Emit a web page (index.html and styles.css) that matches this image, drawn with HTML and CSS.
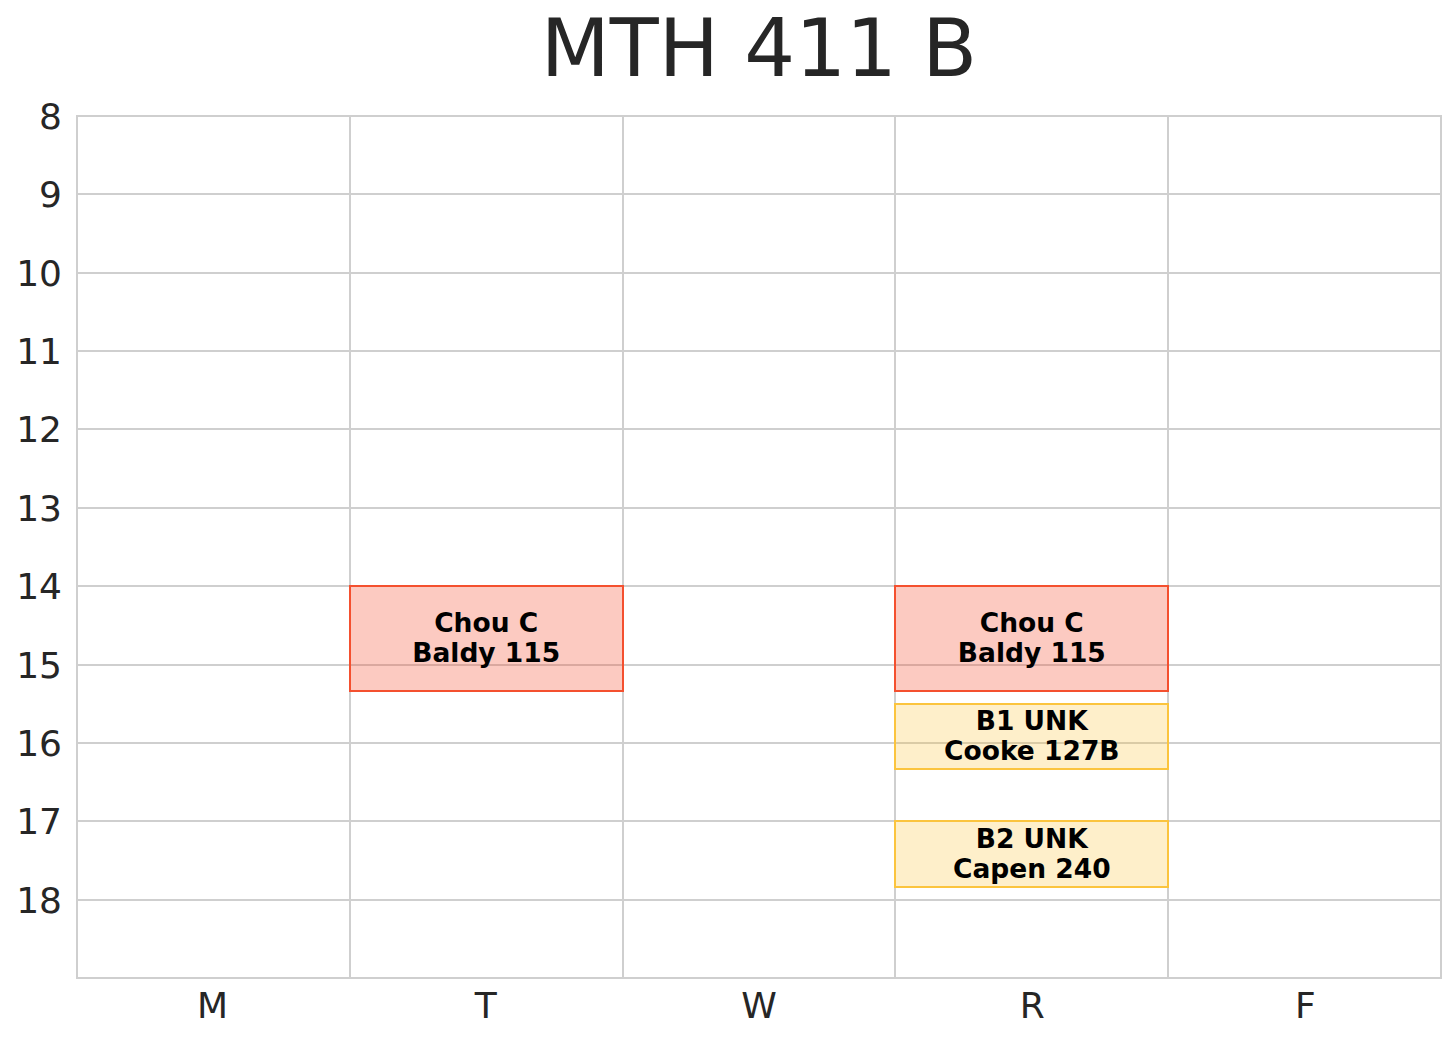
FILE: index.html
```
<!DOCTYPE html>
<html lang="en">
<head>
<meta charset="utf-8">
<title>MTH 411 B</title>
<link rel="stylesheet" href="styles.css">
</head>
<body>
<div class="figure">
  <h1 class="title">MTH 411 B</h1>
  <div class="chart">
    <div class="yaxis">
      <div class="ytick"><span>8</span></div>
      <div class="ytick"><span>9</span></div>
      <div class="ytick"><span>10</span></div>
      <div class="ytick"><span>11</span></div>
      <div class="ytick"><span>12</span></div>
      <div class="ytick"><span>13</span></div>
      <div class="ytick"><span>14</span></div>
      <div class="ytick"><span>15</span></div>
      <div class="ytick"><span>16</span></div>
      <div class="ytick"><span>17</span></div>
      <div class="ytick"><span>18</span></div>
    </div>
    <div class="plot">
      <div class="day"></div>
      <div class="day">
        <div class="event lecture" style="top:468.16px;height:106.48px">Chou C<br>Baldy 115</div>
      </div>
      <div class="day"></div>
      <div class="day">
        <div class="event lecture" style="top:468.16px;height:106.48px">Chou C<br>Baldy 115</div>
        <div class="event recitation" style="top:585.7px;height:67.3px">B1 UNK<br>Cooke 127B</div>
        <div class="event recitation" style="top:703.24px;height:67.3px">B2 UNK<br>Capen 240</div>
      </div>
      <div class="day"></div>
    </div>
  </div>
  <div class="xaxis">
    <div class="xtick">M</div>
    <div class="xtick">T</div>
    <div class="xtick">W</div>
    <div class="xtick">R</div>
    <div class="xtick">F</div>
  </div>
</div>
</body>
</html>
```
FILE: styles.css
```
html, body {
  margin: 0;
  padding: 0;
  background: #ffffff;
}

body {
  width: 1456px;
  height: 1040px;
  overflow: hidden;
  font-family: "DejaVu Sans", "Liberation Sans", sans-serif;
  color: #262626;
}

.figure {
  display: flex;
  flex-direction: column;
}

.title {
  margin: 0 0 18px 76px;
  padding-top: 1px;
  width: 1366px;
  font-size: 80px;
  font-weight: normal;
  line-height: 96px;
  text-align: center;
  color: #262626;
}

.chart {
  display: flex;
}

.yaxis {
  width: 76px;
  box-sizing: border-box;
  padding-top: 1px;
  padding-right: 14px;
  display: flex;
  flex-direction: column;
}

.ytick {
  height: 78.36px;
  display: flex;
  justify-content: flex-end;
  align-items: flex-start;
  font-size: 36px;
}

.ytick span {
  line-height: 0;
  display: block;
  padding-top: 1px;
}

.plot {
  width: 1366px;
  height: 864px;
  box-sizing: border-box;
  border: 2px solid #cfcfcf;
  background: #cfcfcf;
  display: grid;
  grid-template-columns: repeat(5, 1fr);
  column-gap: 2px;
}

.day {
  position: relative;
  background-color: #ffffff;
  background-image: repeating-linear-gradient(to bottom, transparent 0, transparent 76.36px, #cfcfcf 76.36px, #cfcfcf 78.36px);
}

.event {
  position: absolute;
  left: -2px;
  right: -2px;
  box-sizing: border-box;
  border: 2px solid;
  display: flex;
  align-items: center;
  justify-content: center;
  text-align: center;
  font-size: 26.5px;
  font-weight: bold;
  line-height: 30px;
  color: #000000;
}

.lecture {
  background: rgba(244, 80, 50, 0.3);
  border-color: #f4502f;
}

.recitation {
  background: rgba(251, 192, 45, 0.25);
  border-color: #fbc43e;
}

.xaxis {
  margin: 6px 0 0 76px;
  width: 1366px;
  display: grid;
  grid-template-columns: repeat(5, 1fr);
}

.xtick {
  text-align: center;
  font-size: 36px;
  line-height: 42px;
}
```
